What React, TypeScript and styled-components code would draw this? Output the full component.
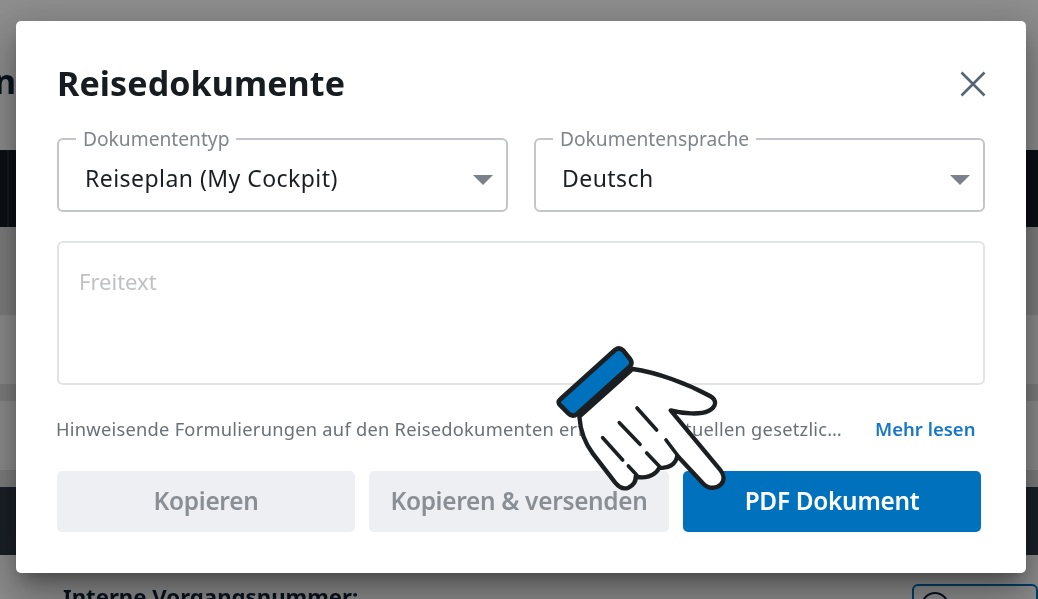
import styled, { createGlobalStyle } from "styled-components";

const GlobalStyle = createGlobalStyle`
  html, body {
    margin: 0;
    height: 100%;
    overflow: hidden;
    background: #ffffff;
    font-family: "Noto Sans", "Open Sans", sans-serif;
  }
  * {
    box-sizing: border-box;
  }
`;

const Page = styled.div`
  position: relative;
  width: 1038px;
  height: 599px;
  overflow: hidden;
  filter: blur(0.6px);
`;

const Band = styled.div<{ h: number; bg: string }>`
  height: ${(props) => props.h}px;
  background: ${(props) => props.bg};
`;

const NavDivider = styled.div`
  width: 2px;
  height: 100%;
  margin-left: 7px;
  background: #2b343c;
`;

const TitleBand = styled.div`
  height: 150px;
  padding-top: 59px;
  background: #ffffff;
`;

const PageTitle = styled.div`
  margin-left: -6px;
  font-size: 34px;
  font-weight: 700;
  line-height: 44px;
  color: #12273c;
`;

const PageFooter = styled.div`
  display: flex;
  justify-content: space-between;
  padding: 28px 0 0 63px;
  background: #ffffff;
  height: 44px;
`;

const PageLabel = styled.div`
  font-size: 22.2px;
  font-weight: 700;
  line-height: 28px;
  color: #12273c;
  white-space: nowrap;
`;

const SearchBox = styled.div`
  width: 126px;
  height: 60px;
  margin-top: 1px;
  padding: 6px 0 0 7px;
  border: 2px solid #0072bd;
  border-radius: 6px;
`;

const SearchCircle = styled.div`
  width: 28px;
  height: 28px;
  border: 2px solid #12273c;
  border-radius: 50%;
`;

const Scrim = styled.div`
  position: absolute;
  inset: 0;
  background: rgba(0, 0, 0, 0.44);
`;

const Dialog = styled.div`
  position: absolute;
  left: 16px;
  top: 21px;
  width: 1010px;
  height: 552px;
  display: flex;
  flex-direction: column;
  padding: 41px 41px 0;
  background: #ffffff;
  border-radius: 5px;
  box-shadow: 0 11px 15px -7px rgba(0, 0, 0, 0.3), 0 24px 38px 3px rgba(0, 0, 0, 0.2),
    0 9px 46px 8px rgba(0, 0, 0, 0.16);
`;

const DialogHeader = styled.div`
  display: flex;
  justify-content: space-between;
  align-items: center;
  height: 44px;
`;

const DialogTitle = styled.h2`
  margin: -2px 0 0;
  font-size: 34px;
  font-weight: 700;
  line-height: 44px;
  letter-spacing: 0.1px;
  color: #171c21;
`;

const CloseIcon = styled.svg`
  width: 28px;
  height: 28px;
  margin-right: -2px;
`;

const SelectRow = styled.div`
  display: grid;
  grid-template-columns: 451px 451px;
  justify-content: space-between;
  width: 928px;
  margin-top: 24px;
`;

const SelectField = styled.fieldset`
  position: relative;
  height: 82px;
  margin: 0;
  padding: 0;
  border: 2px solid #c3c5ca;
  border-radius: 6px;
`;

const SelectLegend = styled.legend`
  margin-left: 17px;
  padding: 0 7px;
  font-size: 19.2px;
  line-height: 18px;
  color: #80858c;
`;

const SelectValue = styled.div`
  padding: 14px 0 0 26px;
  font-size: 23px;
  line-height: 32px;
  letter-spacing: 0.45px;
  color: #1b1f23;
`;

const Caret = styled.span`
  position: absolute;
  right: 13px;
  top: 27px;
  width: 0;
  height: 0;
  border-left: 10px solid transparent;
  border-right: 10px solid transparent;
  border-top: 10px solid #7b808a;
`;

const FreeText = styled.div`
  width: 928px;
  height: 144px;
  margin-top: 29px;
  padding: 24px 20px;
  border: 2px solid #e2e3e5;
  border-radius: 6px;
  font-size: 22px;
  line-height: 28px;
  color: #bfc1c5;
`;

const HintRow = styled.div`
  display: flex;
  align-items: center;
  height: 24px;
  margin-top: 32px;
`;

const HintText = styled.div`
  width: 792px;
  margin-left: -1px;
  overflow: hidden;
  font-size: 18.3px;
  line-height: 24px;
  letter-spacing: 0.25px;
  color: #6a7076;
  text-overflow: ellipsis;
  white-space: nowrap;
`;

const MoreLink = styled.a`
  margin-left: 27px;
  font-size: 18.5px;
  font-weight: 600;
  line-height: 24px;
  color: #1878c6;
  white-space: nowrap;
`;

const ButtonRow = styled.div`
  display: grid;
  grid-template-columns: 298px 300px 298px;
  gap: 14px;
  margin: 30px 0 0 0;
`;

const ActionButton = styled.button<{ primary?: boolean }>`
  height: 61px;
  padding: 0 0 3px;
  border: none;
  border-radius: 5px;
  background: ${(props) => (props.primary ? "#0072bd" : "#eeeff2")};
  color: ${(props) => (props.primary ? "#ffffff" : "#8a8f95")};
  font-family: inherit;
  font-size: 24.4px;
  font-weight: 600;
  letter-spacing: -0.3px;
`;

const HandCursor = styled.svg`
  position: absolute;
  left: 540px;
  top: 335px;
  width: 200px;
  height: 165px;
`;

const App = () => {
  return (
    <Page>
      <GlobalStyle />
      <TitleBand>
        <PageTitle>n</PageTitle>
      </TitleBand>
      <Band h={77} bg="#161e27">
        <NavDivider />
      </Band>
      <Band h={88} bg="#e4e4e4" />
      <Band h={69} bg="#ffffff" />
      <Band h={17} bg="#e4e4e4" />
      <Band h={69} bg="#ffffff" />
      <Band h={17} bg="#e4e4e4" />
      <Band h={68} bg="#303d49" />
      <PageFooter>
        <PageLabel>Interne Vorgangsnummer:</PageLabel>
        <SearchBox>
          <SearchCircle />
        </SearchBox>
      </PageFooter>
      <Scrim />
      <Dialog>
        <DialogHeader>
          <DialogTitle>Reisedokumente</DialogTitle>
          <CloseIcon viewBox="0 0 28 28">
            <path d="M2.5 2.5 L25.5 25.5 M25.5 2.5 L2.5 25.5" stroke="#566473" strokeWidth="2.6" fill="none" />
          </CloseIcon>
        </DialogHeader>
        <SelectRow>
          <SelectField>
            <SelectLegend>Dokumententyp</SelectLegend>
            <SelectValue>Reiseplan (My Cockpit)</SelectValue>
            <Caret />
          </SelectField>
          <SelectField>
            <SelectLegend>Dokumentensprache</SelectLegend>
            <SelectValue>Deutsch</SelectValue>
            <Caret />
          </SelectField>
        </SelectRow>
        <FreeText>Freitext</FreeText>
        <HintRow>
          <HintText>
            Hinweisende Formulierungen auf den Reisedokumenten erfüllen die aktuellen gesetzlichen Vorgaben und
            Bestimmungen
          </HintText>
          <MoreLink>Mehr lesen</MoreLink>
        </HintRow>
        <ButtonRow>
          <ActionButton>Kopieren</ActionButton>
          <ActionButton>Kopieren &amp; versenden</ActionButton>
          <ActionButton primary>PDF Dokument</ActionButton>
        </ButtonRow>
      </Dialog>
      <HandCursor viewBox="0 0 600 495">
        <path
          d="M118 245 C122 295 135 325 158 355 L225 442 C238 458 250 464 265 458 C282 450 288 438 287 424 C310 432 345 425 358 398 C385 402 408 388 412 362 L490 446 C505 462 530 462 543 448 C555 435 552 418 540 404 L392 226 C430 236 480 240 505 228 C530 216 532 195 510 183 C440 145 350 112 278 102 Z"
          fill="#ffffff"
          stroke="#1c1f22"
          strokeWidth="13"
          strokeLinejoin="round"
        />
        <path
          d="M62 192 L225 45 Q238 35 250 47 L270 72 Q280 85 268 96 L112 236 Q98 248 85 235 L62 212 Q50 202 62 192 Z"
          fill="#0072bd"
          stroke="#1c1f22"
          strokeWidth="14"
          strokeLinejoin="round"
        />
        <g stroke="#1c1f22" strokeWidth="11" strokeLinecap="round" fill="none">
          <path d="M291 219 L350 285" />
          <path d="M238 263 L300 328" />
          <path d="M188 308 L248 375" />
          <path d="M265 393 L290 420" />
          <path d="M320 354 L358 394" />
          <path d="M378 315 L412 360" />
        </g>
      </HandCursor>
    </Page>
  );
};

export default App;
